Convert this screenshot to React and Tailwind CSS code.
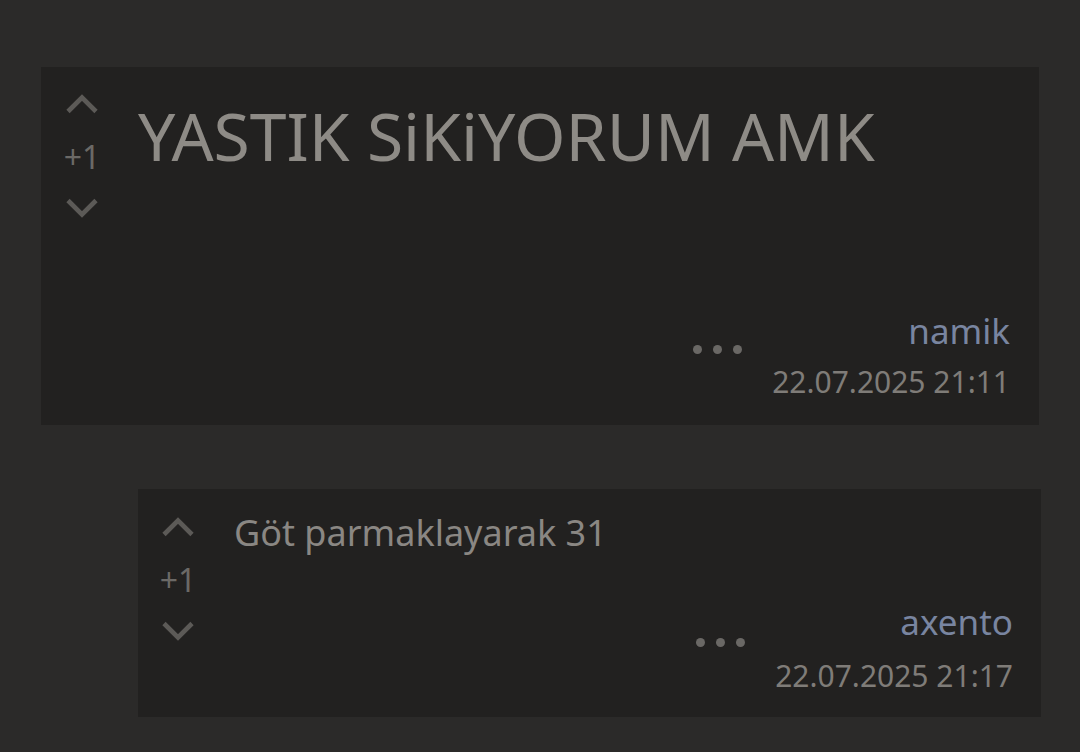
const Chevron = ({ down }) => (
  <svg width="34" height="21" viewBox="0 0 34 21" className="text-[#5c5a57]">
    <path
      d={down ? "M3 3.5 L17 17.5 L31 3.5" : "M3 17.5 L17 3.5 L31 17.5"}
      fill="none"
      stroke="currentColor"
      strokeWidth="4.6"
    />
  </svg>
);

const Votes = ({ className }) => (
  <div className={"flex w-[34px] shrink-0 flex-col items-center " + className}>
    <Chevron />
    <div className="mt-[21px] text-[32px] leading-[41px] text-[#6b6966]">+1</div>
    <div className="mt-[20px]">
      <Chevron down />
    </div>
  </div>
);

const Dots = () => (
  <div className="mb-[14px] flex gap-[11px]">
    <span className="h-[9px] w-[9px] rounded-full bg-[#6a6865]"></span>
    <span className="h-[9px] w-[9px] rounded-full bg-[#6a6865]"></span>
    <span className="h-[9px] w-[9px] rounded-full bg-[#6a6865]"></span>
  </div>
);

const Footer = ({ user, date, className, gap }) => (
  <div className={"flex items-center justify-end gap-[30px] " + className}>
    <Dots />
    <div className="flex flex-col items-end">
      <div className="text-[35px] leading-[40px] text-[#7985a0]">{user}</div>
      <div className={gap + " text-[30px] leading-[41px] text-[#7f7c78]"}>{date}</div>
    </div>
  </div>
);

export default function App() {
  return (
    <div
      className="min-h-[752px] w-full bg-[#2b2a29] pt-[67px]"
      style={{ fontFamily: '"Noto Sans", "Open Sans", sans-serif' }}
    >
      {/* post */}
      <div className="mx-[41px] flex h-[358px] bg-[#222120] pb-[23px] pl-[24px] pr-[29px] pt-[24px]">
        <Votes className="mt-[3px]" />
        <div className="ml-[39px] flex flex-1 flex-col">
          <h1 className="text-[66px] font-normal leading-[88px] text-[#8e8b86]">
            YASTIK SiKiYORUM AMK
          </h1>
          <Footer user="namik" date="22.07.2025 21:11" className="mt-auto" gap="mt-[10px]" />
        </div>
      </div>

      {/* reply */}
      <div className="ml-[138px] mr-[39px] mt-[64px] flex h-[228px] bg-[#222120] pb-[21px] pl-[23px] pr-[28px] pt-[19px]">
        <Votes className="mt-[9px]" />
        <div className="ml-[39px] flex flex-1 flex-col">
          <p className="text-[36px] leading-[49px] text-[#8a8783]">Göt parmaklayarak 31</p>
          <Footer user="axento" date="22.07.2025 21:17" className="mt-auto" gap="mt-[13px]" />
        </div>
      </div>
    </div>
  );
}
